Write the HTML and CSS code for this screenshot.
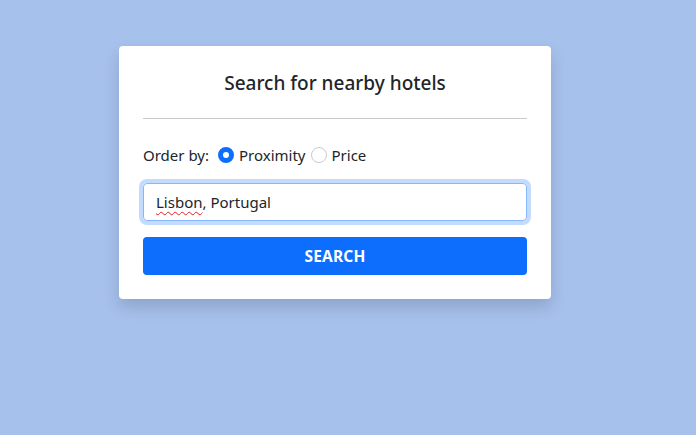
FILE: index.html
```
<!DOCTYPE html>
<html lang="en">
<head>
<meta charset="utf-8">
<title>Search for nearby hotels</title>
<link rel="stylesheet" href="styles.css">
</head>
<body>
<main class="page">
  <section class="card">
    <h5 class="card-title">Search for nearby hotels</h5>
    <hr class="divider">
    <div class="order-row">
      <span class="order-label">Order by:</span>
      <label class="radio-option"><span class="radio radio-checked"></span>Proximity</label>
      <label class="radio-option"><span class="radio"></span>Price</label>
    </div>
    <div class="field"><span class="misspelled">Lisbon</span>, Portugal</div>
    <button class="search-btn" type="button">SEARCH</button>
  </section>
</main>
</body>
</html>
```
FILE: styles.css
```
* { box-sizing: border-box; }
html, body { margin: 0; padding: 0; }
body {
  background: #a6c1ec;
  font-family: "Noto Sans", "Open Sans", sans-serif;
  color: #212529;
  height: 435px;
}
.page {
  padding: 46px 0 0 119px;
}
.card {
  width: 432px;
  background: #fff;
  border-radius: 4px;
  padding: 24px;
  box-shadow: 0 8px 16px rgba(0, 0, 0, 0.15);
}
.card-title {
  margin: 0;
  padding-top: 1px;
  font-size: 19px;
  line-height: 24px;
  font-weight: 500;
  text-align: center;
}
.divider {
  margin: 23px 0 24px;
  border: 0;
  border-top: 1px solid #c8c9ca;
}
.order-row {
  display: flex;
  align-items: center;
  font-size: 15px;
  line-height: 24px;
}
.order-label { margin-right: 9px; }
.radio-option {
  display: flex;
  align-items: center;
  margin-right: 5px;
}
.radio {
  width: 16px;
  height: 16px;
  border-radius: 50%;
  border: 1px solid #c9cccf;
  background: #fff;
  margin-right: 5px;
  flex: none;
}
.radio-checked {
  border: 5px solid #0d6efd;
}
.field {
  margin-top: 16px;
  height: 38px;
  border: 1px solid #86b7fe;
  border-radius: 4px;
  box-shadow: 0 0 0 4px rgba(13, 110, 253, 0.25);
  padding: 0 12px;
  font-size: 15px;
  line-height: 36px;
}
.misspelled {
  text-decoration: underline wavy #e02020;
  text-decoration-thickness: 1px;
  text-underline-offset: 3px;
}
.search-btn {
  display: block;
  width: 100%;
  height: 38px;
  margin-top: 16px;
  border: 0;
  border-radius: 4px;
  background: #0d6efd;
  color: #fff;
  font-family: "Noto Sans", "Open Sans", sans-serif;
  font-size: 15.5px;
  font-weight: 700;
  letter-spacing: 0.2px;
}
```
